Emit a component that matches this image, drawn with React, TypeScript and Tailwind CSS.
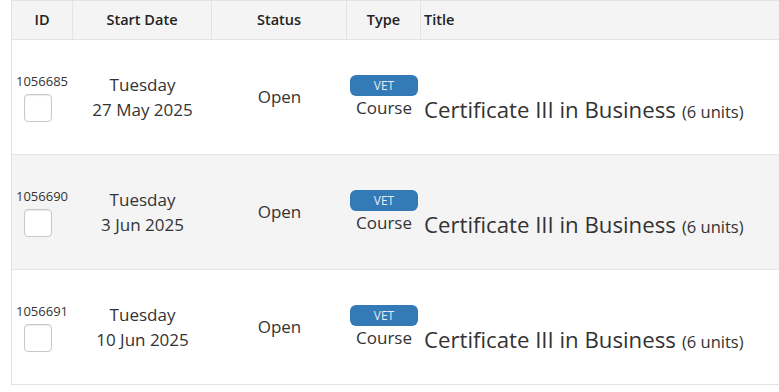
const rows = [
  { id: "1056685", day: "Tuesday", date: "27 May 2025", striped: false },
  { id: "1056690", day: "Tuesday", date: "3 Jun 2025", striped: true },
  { id: "1056691", day: "Tuesday", date: "10 Jun 2025", striped: false },
];

const cols = "grid grid-cols-[61px_139px_135px_74px_1fr]";

export default function App() {
  return (
    <div className="h-[392px] w-[779px] overflow-hidden bg-white font-['Open_Sans',sans-serif] text-[#333]">
      <div className="ml-[11px] w-[900px] border-l border-t border-[#e3e3e3]">
        {/* Header */}
        <div className={`${cols} h-[39px] border-b border-[#e3e3e3] bg-[#f4f4f4] text-[14.5px] font-semibold text-[#222]`}>
          <div className="flex items-center justify-center border-r border-[#e3e3e3]">ID</div>
          <div className="flex items-center justify-center border-r border-[#e3e3e3]">Start Date</div>
          <div className="flex items-center justify-center border-r border-[#e3e3e3]">Status</div>
          <div className="flex items-center justify-center border-r border-[#e3e3e3]">Type</div>
          <div className="flex items-center pl-[3px]">Title</div>
        </div>

        {/* Rows */}
        {rows.map((r) => (
          <div
            key={r.id}
            className={`${cols} h-[115px] border-b border-[#e3e3e3] ${r.striped ? "bg-[#f4f4f4]" : "bg-white"}`}
          >
            <div className="flex flex-col items-center justify-center pr-px">
              <span className="text-[13px] leading-[17px]">{r.id}</span>
              <input
                type="checkbox"
                className="mt-[4px] mr-[8px] h-[28px] w-[28px] appearance-none rounded-[4px] border border-[#c8c8c8] bg-white shadow-[inset_0_1px_1px_rgba(0,0,0,0.08)]"
              />
            </div>
            <div className="flex flex-col items-center justify-center text-[17px] leading-[25px]">
              <span>{r.day}</span>
              <span>{r.date}</span>
            </div>
            <div className="flex items-center justify-center text-[17px]">Open</div>
            <div className="flex flex-col items-center justify-center pt-[1px]">
              <span className="flex h-[21px] w-[68px] items-center justify-center rounded-[6px] bg-[#337ab7] text-[12px] text-[#e4ecf4]">
                VET
              </span>
              <span className="text-[17px] leading-[24px]">Course</span>
            </div>
            <div className="pl-[3px] pt-[55px] leading-[30px]">
              <span className="text-[22.2px]">Certificate III in Business</span>{" "}
              <span className="ml-[2px] text-[16.5px]">(6 units)</span>
            </div>
          </div>
        ))}
      </div>
    </div>
  );
}
